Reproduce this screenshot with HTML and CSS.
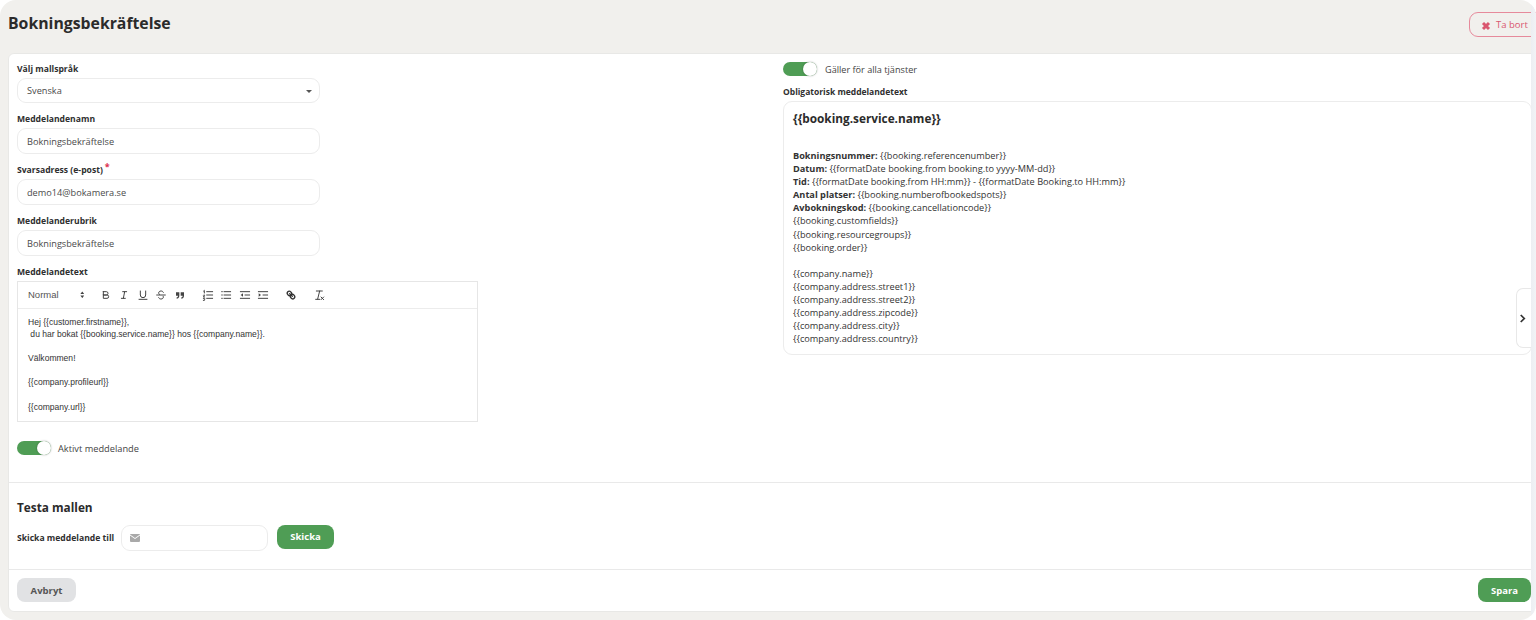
FILE: index.html
```html
<!DOCTYPE html>
<html lang="sv">
<head>
<meta charset="utf-8">
<title>Bokningsbekräftelse</title>
<link rel="stylesheet" href="styles.css">
</head>
<body>
<div class="panel">
  <header class="head">
    <h1>Bokningsbekräftelse</h1>
    <button class="btn-delete"><svg class="x-icon" viewBox="0 0 10 10"><path d="M2 2l6 6M8 2l-6 6"/></svg>Ta bort</button>
  </header>
  <section class="card">
    <div class="cols">
      <div class="col-left">
        <div class="field">
          <label>Välj mallspråk</label>
          <div class="control select">Svenska<span class="caret"></span></div>
        </div>
        <div class="field">
          <label>Meddelandenamn</label>
          <div class="control tall">Bokningsbekräftelse</div>
        </div>
        <div class="field">
          <label>Svarsadress (e-post)<sup class="req">*</sup></label>
          <div class="control tall">demo14@bokamera.se</div>
        </div>
        <div class="field">
          <label>Meddelanderubrik</label>
          <div class="control tall">Bokningsbekräftelse</div>
        </div>
        <div class="field editor-field">
          <label>Meddelandetext</label>
          <div class="editor">
            <div class="toolbar">
              <div class="picker">Normal<svg class="updown" viewBox="0 0 6 10"><path d="M3 0.5L5.500 4H0.500zM3 9.500L0.500 6H5.500z"/></svg></div>
              <div class="tgroup">
                <span class="tb"><svg viewBox="0 0 18 18"><path d="M5,4H9.500A2.500,2.500,0,0,1,12,6.500v0A2.500,2.500,0,0,1,9.500,9H5V4Z"/><path d="M5,9h5.500A2.500,2.500,0,0,1,13,11.500v0A2.500,2.500,0,0,1,10.500,14H5V9Z"/></svg></span>
                <span class="tb"><svg viewBox="0 0 18 18"><path d="M7 4h6M5 14h6M8 14l2-10"/></svg></span>
                <span class="tb"><svg viewBox="0 0 18 18"><path d="M5,3V9a4,4,0,0,0,4,4h0a4,4,0,0,0,4-4V3"/><path d="M3 15.500h12"/></svg></span>
                <span class="tb"><svg viewBox="0 0 18 18"><path d="M2.500 9h13"/><path d="M12.500,5C12,3.700 10.600,3 9,3C7,3 5.500,4.200 5.500,6C5.500,7 6,7.700 7,8.300M12.300,11C12.500,11.500 12.500,11.800 12.500,12.200C12.500,14 11,15 9,15C7.300,15 6,14.300 5.500,13"/></svg></span>
                <span class="tb"><svg class="solid" viewBox="0 0 18 18"><path d="M3 5h5v5c0 3-2 4.500-4 4.500v-2c1 0 2-.7 2-2.500H3zM10 5h5v5c0 3-2 4.500-4 4.500v-2c1 0 2-.7 2-2.500h-3z"/></svg></span>
              </div>
              <div class="tgroup">
                <span class="tb"><svg viewBox="0 0 18 18"><path d="M7 4h9M7 9h9M7 14h9M2.500 3l1-1v4M2 9.500c.5-1 2-1 2 0 0 .8-2 1.500-2 2.500h2M2 14h1.500c1 0 1 1.500 0 1.500c1 0 1 1.500 0 1.500H2"/></svg></span>
                <span class="tb"><svg viewBox="0 0 18 18"><path d="M6 4h10M6 9h10M6 14h10M2.500 4h1M2.500 9h1M2.500 14h1"/></svg></span>
                <span class="tb"><svg viewBox="0 0 18 18"><path d="M2 4h14M2 14h14M9 9h7"/><path class="fillp" d="M6 6.500v5L2.500 9z"/></svg></span>
                <span class="tb"><svg viewBox="0 0 18 18"><path d="M2 4h14M2 14h14M9 9h7"/><path class="fillp" d="M2.500 6.500v5L6 9z"/></svg></span>
              </div>
              <div class="tgroup">
                <span class="tb"><svg class="heavy" viewBox="0 0 18 18"><path d="M7 7l4 4"/><path d="M8.900,4.577a3.476,3.476,0,0,1,.36,4.679A3.476,3.476,0,0,1,4.577,8.900C3.185,7.500,2.035,6.400,4.217,4.217S7.500,3.185,8.900,4.577Z"/><path d="M13.423,9.100a3.476,3.476,0,0,0-4.679-.36,3.476,3.476,0,0,0,.36,4.679c1.392,1.392,2.500,2.542,4.679.36S14.815,10.500,13.423,9.100Z"/></svg></span>
              </div>
              <div class="tgroup">
                <span class="tb"><svg viewBox="0 0 18 18"><path d="M5 3h9M10 3l-3 12M4 15.500h6M12 12l4 4M16 12l-4 4"/></svg></span>
              </div>
            </div>
            <div class="editor-body">
              <p>Hej {{customer.firstname}},</p>
              <p>&nbsp;du har bokat {{booking.service.name}} hos {{company.name}}.</p>
              <p>&nbsp;</p>
              <p>Välkommen!</p>
              <p>&nbsp;</p>
              <p>{{company.profileurl}}</p>
              <p>&nbsp;</p>
              <p>{{company.url}}</p>
            </div>
          </div>
        </div>
        <div class="toggle-row active-row"><span class="toggle"></span><span>Aktivt meddelande</span></div>
      </div>
      <div class="col-right">
        <div class="toggle-row"><span class="toggle"></span><span>Gäller för alla tjänster</span></div>
        <label class="mandatory-label">Obligatorisk meddelandetext</label>
        <div class="mandatory">
          <h2>{{booking.service.name}}</h2>
          <div class="lines">
            <p><b>Bokningsnummer:</b> {{booking.referencenumber}}</p>
            <p><b>Datum:</b> {{formatDate booking.from booking.to yyyy-MM-dd}}</p>
            <p><b>Tid:</b> {{formatDate booking.from HH:mm}} - {{formatDate Booking.to HH:mm}}</p>
            <p><b>Antal platser:</b> {{booking.numberofbookedspots}}</p>
            <p><b>Avbokningskod:</b> {{booking.cancellationcode}}</p>
            <p>{{booking.customfields}}</p>
            <p>{{booking.resourcegroups}}</p>
            <p>{{booking.order}}</p>
            <p>&nbsp;</p>
            <p>{{company.name}}</p>
            <p>{{company.address.street1}}</p>
            <p>{{company.address.street2}}</p>
            <p>{{company.address.zipcode}}</p>
            <p>{{company.address.city}}</p>
            <p>{{company.address.country}}</p>
          </div>
          <div class="tab"><svg viewBox="0 0 8 10"><path d="M2 1l4 4-4 4"/></svg></div>
        </div>
      </div>
    </div>
    <div class="test">
      <h3>Testa mallen</h3>
      <div class="test-row">
        <label>Skicka meddelande till</label>
        <div class="control email"><svg class="mail" viewBox="0 0 10 8"><path d="M0 1.500V7a1 1 0 0 0 1 1h8a1 1 0 0 0 1-1V1.500L5 5z"/><path d="M0 .6A.6.6 0 0 1 .6 0h8.800a.6.6 0 0 1 .6.6L5 4z"/></svg></div>
        <button class="btn btn-green">Skicka</button>
      </div>
    </div>
    <footer class="foot">
      <button class="btn btn-gray">Avbryt</button>
      <button class="btn btn-green">Spara</button>
    </footer>
  </section>
  <div class="edge"></div>
</div>
</body>
</html>
```
FILE: styles.css
```css
* { box-sizing: border-box; }
html, body { margin: 0; height: 100%; background: #fff; }
body { font-family: "Open Sans", sans-serif; color: #333; overflow: hidden; }
.panel { position: relative; width: 1536px; height: 620px; background: #f1f0ed; border-radius: 16px; overflow: hidden; }
.head { display: flex; justify-content: space-between; height: 53px; padding: 11px 0 0 8px; }
h1 { margin: 0; font-size: 15.800px; line-height: 24px; font-weight: 700; color: #2b2b2b; }
.btn-delete { display: flex; align-items: center; flex: none; width: 80px; height: 25px; margin-top: 1px; margin-right: -13px; padding: 0 0 0 11px; background: transparent; border: 1px solid #e68a9b; border-radius: 9px; color: #d9566f; font: 400 9.500px "Open Sans", sans-serif; }
.x-icon { width: 10px; height: 10px; margin-right: 5px; margin-top: 2px; fill: none; stroke: #d9566f; stroke-width: 3; }
.card { width: 1532px; height: 559px; margin-left: 8px; padding-top: 8px; background: #fff; border: 1px solid #e8e8e6; border-radius: 6px; }
.cols { display: grid; grid-template-columns: 748px 748px; column-gap: 18px; height: 421px; padding-left: 8px; border-bottom: 1px solid #e9e9e9; width: 1522px; }
label { display: block; font-size: 8.600px; line-height: 14px; font-weight: 700; color: #2f2f2f; white-space: nowrap; }
.field { margin-bottom: 9px; }
.field label { margin-bottom: 2px; }
.control { display: flex; align-items: center; position: relative; width: 303px; height: 25px; padding-left: 9px; background: #fff; border: 1px solid #ececec; border-radius: 9px; font-size: 9.200px; color: #4a4a4a; }
.control.tall { height: 26px; }
.caret { position: absolute; right: 7px; top: 11px; border: 3px solid transparent; border-top: 3.500px solid #555; border-bottom: 0; }
.req { color: #dc2f50; font-size: 9px; line-height: 0; margin-left: 2px; vertical-align: 3px; }
.editor { width: 461px; height: 141px; border: 1px solid #e6e6e6; }
.toolbar { display: flex; align-items: center; height: 27px; padding: 0 0 1px 10px; border-bottom: 1.500px solid #ececec; }
.picker { display: flex; align-items: center; justify-content: space-between; width: 59px; padding-right: 3px; font: 9.500px "Liberation Sans", sans-serif; color: #555; }
.updown { width: 4.500px; height: 7.500px; fill: #444; }
.tgroup { display: flex; margin-left: 9.500px; }
.tb { display: flex; align-items: center; justify-content: center; width: 18.500px; height: 16px; }
.tb svg { width: 12px; height: 12px; fill: none; stroke: #444; stroke-width: 1.500; stroke-linecap: round; stroke-linejoin: round; }
.tb svg.solid { fill: #444; stroke: none; }
.tb svg.heavy { stroke: #333; stroke-width: 2; }
.tb .fillp { fill: #444; stroke: none; }
.editor-body { padding: 7px 10px; font: 8.550px/12.100px "Liberation Sans", sans-serif; color: #333; }
.editor-body p { margin: 0; }
.editor-field { margin-bottom: 0; }
.toggle-row { display: flex; align-items: center; gap: 7px; height: 14px; font-size: 9.250px; color: #444; }
.col-right .toggle-row { gap: 8px; font-size: 9.150px; }
.active-row { margin-top: 19px; }
.toggle { position: relative; flex: none; width: 34px; height: 14px; background: #4f9d55; border-radius: 7px; }
.toggle::after { content: ""; position: absolute; right: 0; top: 0; width: 14px; height: 14px; background: #fff; border-radius: 50%; box-shadow: 0 0 2px rgba(0,0,0,.35); }
.mandatory-label { margin-top: 9px; margin-bottom: 2px; line-height: 14px; font-size: 8.500px; }
.mandatory { position: relative; width: 749px; height: 254px; padding: 8px 9px; border: 1px solid #ececec; border-radius: 9px; font-size: 9.200px; color: #333; }
.mandatory h2 { margin: 0 0 22px; font-size: 11.800px; line-height: 17px; font-weight: 700; color: #2b2b2b; }
.lines p { margin: 0; line-height: 13.100px; }
.lines b { font-weight: 700; }
.tab { position: absolute; right: -1px; top: 186px; display: flex; align-items: center; padding-left: 2px; width: 16px; height: 60px; background: #fff; border: 1px solid #e8e8e8; border-right: 0; border-radius: 7px 0 0 7px; }
.tab svg { width: 7px; height: 9px; fill: none; stroke: #333; stroke-width: 2; }
.test { height: 87px; padding: 15px 0 0 8px; border-bottom: 1px solid #e9e9e9; width: 1522px; }
h3 { margin: 0 0 8.500px; font-size: 11.800px; line-height: 18px; font-weight: 700; color: #2b2b2b; }
.test-row { display: flex; align-items: flex-start; }
.test-row label { width: 104px; line-height: 26px; flex: none; }
.email { width: 147px; height: 26px; }
.mail { width: 10px; height: 8px; margin-left: -1px; fill: #a9a9a9; stroke: none; }
.btn { height: 24px; padding: 0; border: 0; border-radius: 8px; font: 700 9.500px "Open Sans", sans-serif; }
.btn-green { width: 57px; background: #4f9d55; color: #fff; }
.test-row .btn { margin-left: 9px; }
.btn-gray { width: 59px; background: #e1e2e4; color: #555; }
.foot { display: flex; justify-content: space-between; width: 1522px; padding: 8px 0 0 8px; }
.foot .btn-green { width: 53px; margin-right: 0; }
.edge { position: absolute; right: 0; top: 0; bottom: 0; width: 5px; background: linear-gradient(90deg, #eceef2, #f1f3f6); }
```
